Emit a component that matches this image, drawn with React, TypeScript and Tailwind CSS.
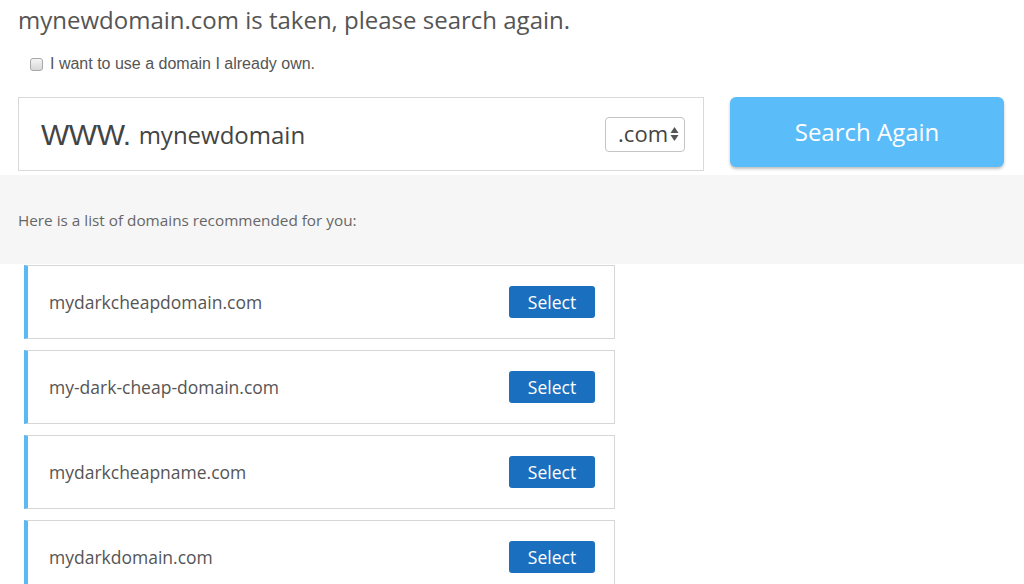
import React from 'react';

const domains = [
    'mydarkcheapdomain.com',
    'my-dark-cheap-domain.com',
    'mydarkcheapname.com',
    'mydarkdomain.com',
];

export default function App() {
    return (
        <div className="bg-white min-h-screen w-[1024px] overflow-hidden font-['Open_Sans',sans-serif]">
            {/* heading + checkbox */}
            <div className="px-[18px] pt-[4px]">
                <h1 className="text-[24px] leading-[32px] text-[#555] font-normal">
                    mynewdomain.com is taken, please search again.
                </h1>
                <label className="mt-[19px] ml-[12px] flex items-center h-[18px] gap-[7px] font-['Liberation_Sans',Arial,sans-serif] text-[16px] text-[#555]">
                    <span className="w-[13px] h-[13px] rounded-[3px] border border-[#a8a8a8] bg-gradient-to-b from-[#f4f4f4] to-[#d8d8d8]" />
                    I want to use a domain I already own.
                </label>
            </div>

            {/* search row */}
            <div className="flex items-start px-[18px] mt-[24px] gap-[26px]">
                <div className="w-[686px] h-[74px] border border-[#d9d9d9] flex items-center pl-[22px] pr-[18px]">
                    <span className="font-['Liberation_Sans',Arial,sans-serif] text-[30px] text-[#444] tracking-[-0.5px] mr-[8px]">
                        WWW.
                    </span>
                    <span className="text-[24px] text-[#444] flex-1 mt-[2px]">mynewdomain</span>
                    <div className="h-[35px] w-[80px] border border-[#c4c4c4] rounded-[4px] flex items-center justify-end pr-[5px] gap-[2px]">
                        <span className="text-[22px] text-[#444] leading-none mb-[2px]">.com</span>
                        <svg width="9" height="16" viewBox="0 0 9 16">
                            <path d="M4.5 1 L8.5 7 L0.5 7 Z" fill="#555" />
                            <path d="M4.5 15 L8.5 9 L0.5 9 Z" fill="#555" />
                        </svg>
                    </div>
                </div>
                <button className="w-[274px] h-[70px] rounded-[6px] bg-[#5abcf8] text-white text-[24px] shadow-[0_2px_3px_rgba(0,0,0,0.25)]">
                    Search Again
                </button>
            </div>

            {/* recommendation band */}
            <div className="mt-[4px] h-[89px] bg-[#f6f6f6] px-[18px] flex items-center">
                <p className="text-[15.3px] text-[#666] mt-[2px]">Here is a list of domains recommended for you:</p>
            </div>

            {/* results */}
            <div className="pl-[24px] flex flex-col gap-[11px] pt-[1px]">
                {domains.map((d) => (
                    <div
                        key={d}
                        className="w-[591px] h-[74px] border border-[#d6d6d6] border-l-[4px] border-l-[#5ab9f3] flex items-center justify-between pl-[21px] pr-[19px]"
                    >
                        <span className="text-[17.5px] text-[#555]">{d}</span>
                        <button className="w-[86px] h-[32px] rounded-[3px] bg-[#1b6fbf] text-white text-[17.5px]">
                            Select
                        </button>
                    </div>
                ))}
            </div>
        </div>
    );
}
